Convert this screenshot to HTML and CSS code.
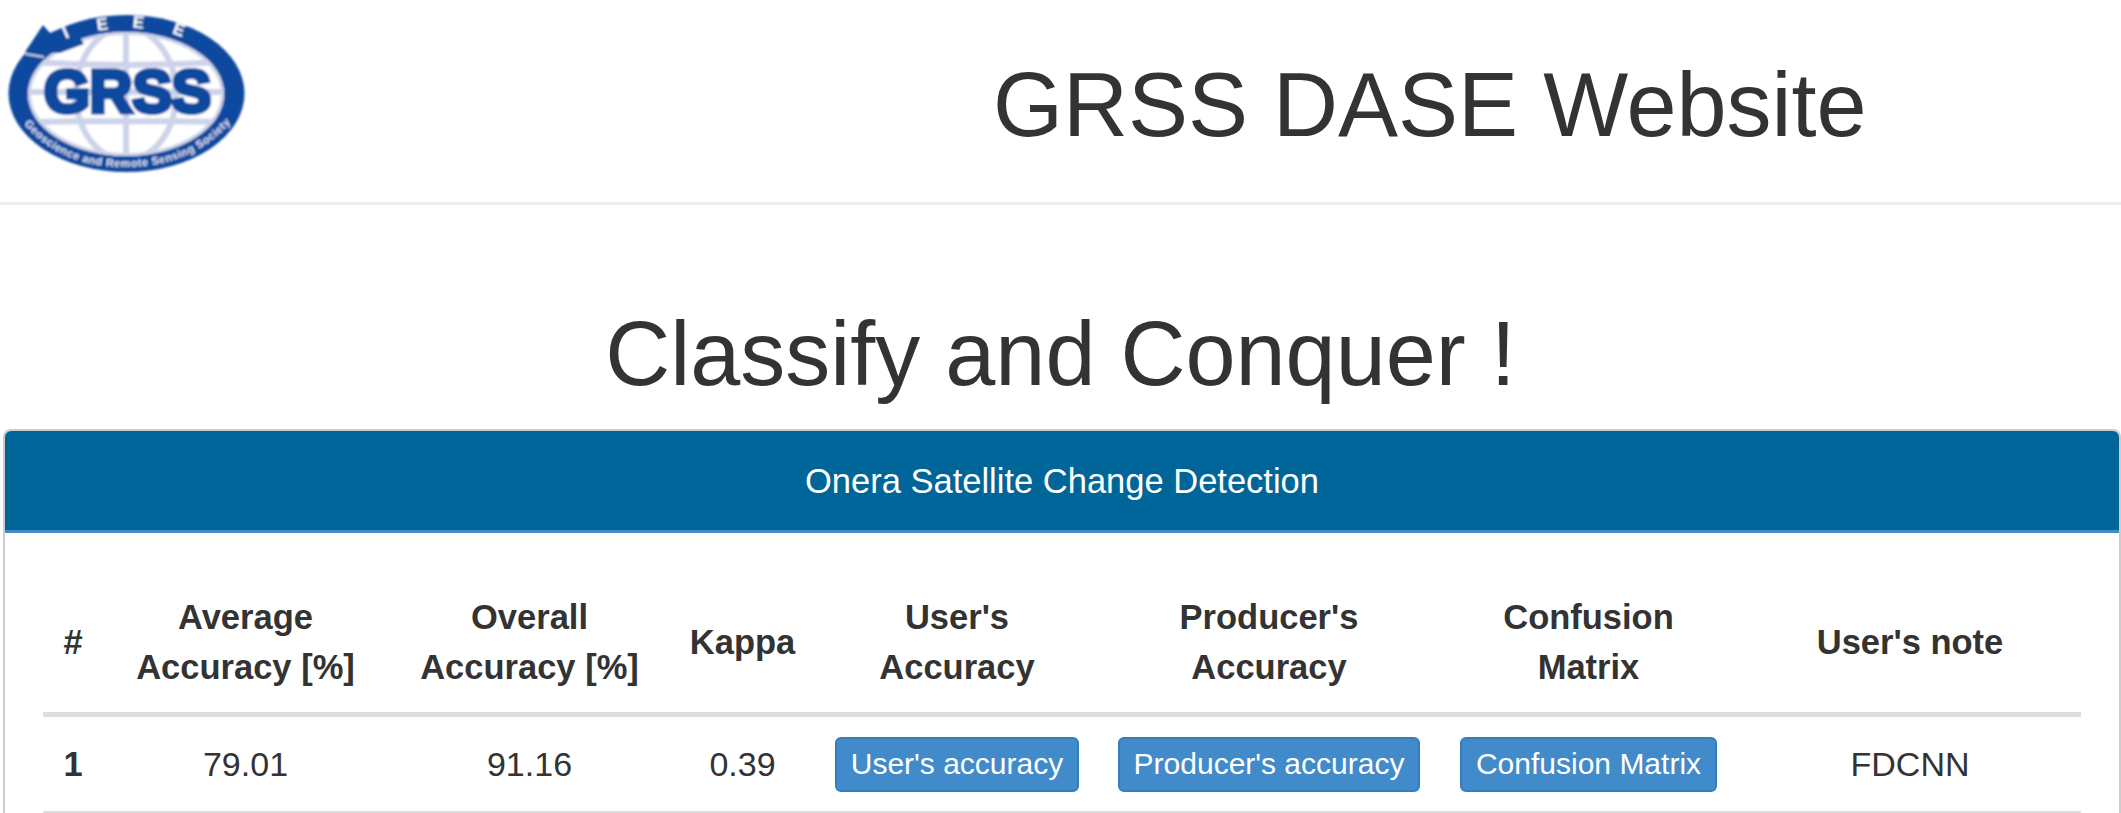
FILE: index.html
```html
<!DOCTYPE html>
<html lang="en">
<head>
  <meta charset="UTF-8">
  <title>GRSS DASE Website</title>
  <meta name="viewport" content="width=device-width, initial-scale=1.0">
  <link rel="stylesheet" href="styles.css">
</head>
<body>

  <!-- Top bar -->
  <nav class="navbar">
    <svg class="logo" width="270" height="202" viewBox="0 0 270 202">
      <defs>
        <filter id="soft"><feGaussianBlur stdDeviation="0.8"/></filter>
        <clipPath id="globe"><ellipse cx="126" cy="94" rx="98" ry="62"/></clipPath>
        <path id="bottomArc" d="M24 124 Q62 168 126 167 Q192 167 231 122"/>
      </defs>
      <g filter="url(#soft)">
        <ellipse cx="126.500" cy="93.500" rx="118" ry="78.500" fill="#0f4a9e"/>
        <ellipse cx="126" cy="94" rx="98" ry="62" fill="#fff"/>
        <g clip-path="url(#globe)" fill="none" stroke="#ccd3ea" stroke-width="6">
          <ellipse cx="126" cy="94" rx="98" ry="62"/>
          <ellipse cx="126" cy="94" rx="50" ry="66"/>
          <path d="M126 25V165M25 92H228M30 62Q126 68 222 62M30 122Q126 120 222 122"/>
        </g>
        <path d="M25 52 43 25 50 33 72 24 84 44 60 53Z" fill="#0f4a9e"/>
        <path d="M26 54 44 57" stroke="#ccd3ea" stroke-width="2"/>
        <text class="logo-ieee" x="68" y="38" transform="rotate(-24 68 38)">I</text>
        <text class="logo-ieee" x="103" y="30" transform="rotate(-8 103 30)">E</text>
        <text class="logo-ieee" x="138" y="28" transform="rotate(6 138 28)">E</text>
        <text class="logo-ieee" x="177" y="35" transform="rotate(20 177 35)">E</text>
        <text class="logo-grss" x="44" y="112" textLength="167" lengthAdjust="spacingAndGlyphs">GRSS</text>
        <text class="logo-sub"><textPath href="#bottomArc" textLength="232">Geoscience and Remote Sensing Society</textPath></text>
      </g>
    </svg>
    <h1 class="site-title">GRSS DASE Website</h1>
  </nav>

  <h1 class="page-title">Classify and Conquer !</h1>

  <div class="panel">
    <div class="panel-heading">Onera Satellite Change Detection</div>
    <div class="panel-body">
      <table class="results">
        <colgroup>
          <col class="c-rank"><col class="c-avg"><col class="c-overall"><col class="c-kappa">
          <col class="c-user"><col class="c-prod"><col class="c-conf"><col class="c-note">
        </colgroup>
        <thead>
          <tr>
            <th>#</th>
            <th>Average<br>Accuracy [%]</th>
            <th>Overall<br>Accuracy [%]</th>
            <th>Kappa</th>
            <th>User's<br>Accuracy</th>
            <th>Producer's<br>Accuracy</th>
            <th>Confusion<br>Matrix</th>
            <th>User's note</th>
          </tr>
        </thead>
        <tbody>
          <tr>
            <th>1</th>
            <td>79.01</td>
            <td>91.16</td>
            <td>0.39</td>
            <td><button class="btn">User's accuracy</button></td>
            <td><button class="btn">Producer's accuracy</button></td>
            <td><button class="btn">Confusion Matrix</button></td>
            <td>FDCNN</td>
          </tr>
        </tbody>
      </table>
    </div>
  </div>

</body>
</html>
```

FILE: styles.css
```css
html, body {
  height: 100%;
}

body {
  margin: 0;
  overflow: hidden;
  background: #fff;
  color: #333;
  font-family: "Liberation Sans", Arial, sans-serif;
  font-size: 34px;
}

.navbar {
  display: flex;
  align-items: center;
  height: 202px;
  border-bottom: 3px solid #eee;
}

.logo {
  flex: none;
}

.logo-ieee {
  font-size: 17px;
  font-weight: bold;
  fill: #fff;
  text-anchor: middle;
}

.logo-grss {
  font-size: 60px;
  font-weight: bold;
  fill: #0f4a9e;
  stroke: #0f4a9e;
  stroke-width: 5px;
}

.logo-sub {
  font-size: 11px;
  font-weight: bold;
  fill: #dfe5f5;
}

h1 {
  margin: 0;
  font-weight: normal;
  font-size: 90px;
  line-height: 1.1;
}

.site-title {
  margin-left: 723px;
  padding-top: 8px;
}

.page-title {
  padding-top: 100px;
  height: 224px;
  box-sizing: border-box;
  text-align: center;
}

.panel {
  margin: 0 0 0 3px;
  border: 2px solid #ccc;
  border-bottom: 0;
  border-radius: 8px 8px 0 0;
  overflow: hidden;
}

.panel-heading {
  height: 99px;
  line-height: 101px;
  background: #069;
  border-bottom: 3px solid #428bca;
  color: #fff;
  font-size: 34.500px;
  text-align: center;
}

.panel-body {
  padding: 43px 38px 0;
}

.results {
  width: 100%;
  border-collapse: collapse;
  table-layout: fixed;
  text-align: center;
}

.results th,
.results td {
  padding: 19px 0;
  line-height: 50px;
  vertical-align: middle;
}

.results th {
  font-weight: bold;
  font-size: 34.500px;
}

.results thead th {
  border-bottom: 5px solid #ddd;
  padding-top: 16px;
  padding-bottom: 20px;
}

.results tbody td,
.results tbody th {
  border-bottom: 2px solid #ddd;
}

.c-rank { width: 60px; }
.c-avg { width: 285px; }
.c-overall { width: 283px; }
.c-kappa { width: 143px; }
.c-user { width: 286px; }
.c-prod { width: 338px; }
.c-conf { width: 301px; }
.c-note { width: 342px; }

.btn {
  padding: 0 14px;
  height: 55px;
  background: #428bca;
  border: 2px solid #357ebd;
  border-radius: 6px;
  color: #fff;
  font-family: inherit;
  font-size: 30px;
  white-space: nowrap;
  vertical-align: middle;
}
```
